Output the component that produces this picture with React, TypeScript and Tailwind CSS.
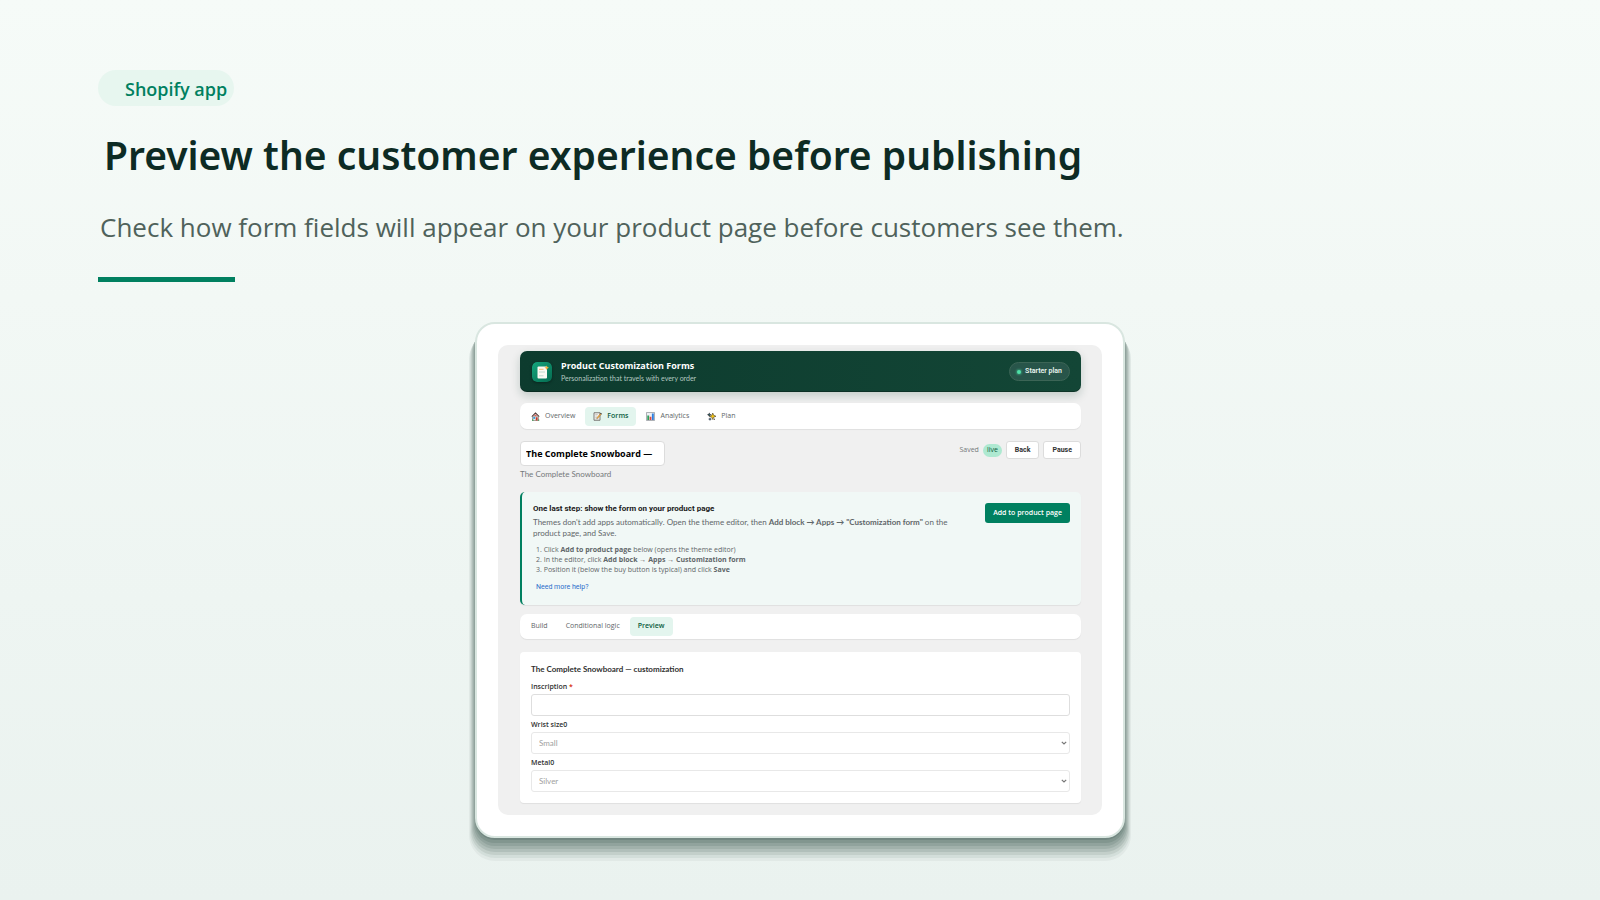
import { useState, type ReactNode } from "react";

function HouseIcon() {
  return (
    <svg viewBox="0 0 18 18" className="size-[9px]" aria-hidden="true">
      <path d="M3 8.5h12V17H3z" fill="#f1eee8" stroke="#5b5350" strokeWidth="1" />
      <path d="M9 .5.500 9H3l6-5.500L15 9h2.500z" fill="#4a2f2c" />
      <path d="M9 4.500 5.500 8h7z" fill="#d8665c" />
      <rect x="9.500" y="10.500" width="3.800" height="6.500" fill="#c0392b" />
      <rect x="4.500" y="10" width="3.800" height="3.800" fill="#3b9ad9" />
      <rect x="2" y="15" width="3" height="2.500" fill="#3f9b54" />
      <rect x="14" y="15" width="2.500" height="2.500" fill="#3f9b54" />
    </svg>
  );
}

function MemoIcon() {
  return (
    <svg viewBox="0 0 18 18" className="size-[9px]" aria-hidden="true">
      <path d="M2 1.500h12v15H2z" fill="#f7f5f2" stroke="#55504d" strokeWidth="1.500" />
      <path d="M4.500 5h5M4.500 8h4M4.500 11h3M4.500 14h7" stroke="#a3a09d" strokeWidth="1" />
      <path d="m8 11 6.500-8 2 1.700L10 12.500l-2.700.8z" fill="#f2a93b" stroke="#6b4a24" strokeWidth=".5" />
      <path d="m14.200 3.200 1.300-1.600 2.400 1.900-1.300 1.600z" fill="#3b3432" />
    </svg>
  );
}

function BarsIcon() {
  return (
    <svg viewBox="0 0 18 18" className="size-[9px]" aria-hidden="true">
      <path d="M1 1h16v16H1z" fill="#eef1f4" stroke="#7c8288" strokeWidth="1.200" />
      <rect x="2.600" y="7" width="3.600" height="9" fill="#2f9e5b" />
      <rect x="7.200" y="9.500" width="3.600" height="6.500" fill="#e0483e" />
      <rect x="11.800" y="3" width="3.800" height="13" fill="#2f7fe0" />
    </svg>
  );
}

function SparkIcon() {
  return (
    <svg viewBox="0 0 18 18" className="size-[9px]" aria-hidden="true">
      <path d="M4.500 1 6 4l3 1.500L6 7 4.500 10 3 7 0 5.500 3 4z" fill="#2b2a33" />
      <path d="m11.500 2 1.900 4.600L18 8.500l-4.600 1.900L11.500 15l-1.900-4.600L5 8.500l4.600-1.900z" fill="#f5c518" stroke="#3a3320" strokeWidth="1.100" />
      <path d="M6 10.500 7.200 13l2.600 1.200L7.200 15.400 6 18l-1.200-2.600L2.200 14.200 4.800 13z" fill="#3b4a5c" />
      <circle cx="4.500" cy="5.500" r="1.200" fill="#3aa6a0" />
      <circle cx="14.500" cy="14.500" r="1.300" fill="#4b3d20" />
    </svg>
  );
}

function AppLogo() {
  return (
    <svg viewBox="0 0 20 20" className="size-5 shrink-0 rounded-[5px] shadow-[0_1px_3px_rgba(0,0,0,0.35)]" aria-hidden="true">
      <defs>
        <linearGradient id="logo" x1="0" y1="0" x2="1" y2="1">
          <stop offset="0" stopColor="#15a67d" />
          <stop offset="1" stopColor="#056b50" />
        </linearGradient>
      </defs>
      <rect width="20" height="20" rx="5" fill="url(#logo)" />
      <rect x="5.500" y="4.500" width="9.500" height="12" rx="1" fill="#fbfaf3" />
      <path d="M7 7.300h4.500" stroke="#f0b36a" strokeWidth=".9" />
      <path d="M7 10h6M7 13.800h4.500" stroke="#b9d8cc" strokeWidth=".9" />
      <path d="m14.700 3.600.7 1.500 1.600.6-1.600.7-.7 1.500-.7-1.500-1.500-.7 1.500-.6z" fill="#f6b23c" />
    </svg>
  );
}

function Tab({ active, onClick, children }: { active: boolean; onClick: () => void; children: ReactNode }) {
  return (
    <button
      type="button"
      aria-pressed={active}
      onClick={onClick}
      className={
        active
          ? "flex h-[19px] items-center gap-[5px] rounded-[4px] bg-[#e3f5ee] px-2 text-[7px] font-semibold text-[#0b5c40]"
          : "flex h-[19px] items-center gap-[5px] rounded-[4px] px-2 text-[7px] font-medium text-[#616669]"
      }
    >
      {children}
    </button>
  );
}

function SelectField({ id, label, options }: { id: string; label: string; options: string[] }) {
  return (
    <div>
      <label htmlFor={id} className="block pt-0.5 text-[7px] leading-[14px] font-semibold text-[#303030]">
        {label}
      </label>
      <div className="relative">
        <select
          id={id}
          className="block h-[22px] w-full appearance-none rounded-[3px] border border-[#e8e8e8] bg-white px-[7px] font-[Lato,sans-serif] text-[8px] text-[#a0a0a0]"
        >
          {options.map((o) => (
            <option key={o}>{o}</option>
          ))}
        </select>
        <svg viewBox="0 0 6 4" className="pointer-events-none absolute top-[9px] right-[3px] h-1 w-1.5" aria-hidden="true">
          <path d="m.8.800 2.200 2.200L5.200.800" fill="none" stroke="#777" strokeWidth="1.200" />
        </svg>
      </div>
    </div>
  );
}

const sections = [
  { name: "Overview", icon: <HouseIcon /> },
  { name: "Forms", icon: <MemoIcon /> },
  { name: "Analytics", icon: <BarsIcon /> },
  { name: "Plan", icon: <SparkIcon /> },
];

const views = ["Build", "Conditional logic", "Preview"];

const panel = "bg-white shadow-[0_1px_1px_rgba(0,0,0,0.07)]";
const smallButton =
  "h-[18px] rounded-[3px] border border-[#dcdcdc] bg-white px-2 font-[Roboto,sans-serif] text-[7px] font-bold text-[#303030]";

export default function App() {
  const [section, setSection] = useState("Forms");
  const [view, setView] = useState("Preview");

  return (
    <main className="min-h-screen bg-linear-to-b from-[#f6fbf8] to-[#eaf2ef] pt-[70px] pb-10 font-['Open_Sans','Noto_Sans',sans-serif]">
      <header className="px-[98px]">
        <p className="flex h-9 w-[136px] items-center rounded-full bg-[#e7f6ef] pt-0.5 pl-[27px] text-[18px] font-semibold whitespace-nowrap text-[#008060]">
          Shopify app
        </p>
        <h1 className="mt-[23px] pl-1.5 font-['Noto_Sans',sans-serif] text-[39px] leading-[52px] font-semibold text-[#0d2b24]">
          Preview the customer experience before publishing
        </h1>
        <p className="mt-7 pl-0.5 text-[26px] leading-9 text-[#4f625b]">
          Check how form fields will appear on your product page before customers see them.
        </p>
        <div className="mt-8 h-[5px] w-[137px] bg-[#008060]" />
      </header>

      <section className="mx-auto mt-10 w-full max-w-[650px] rounded-[20px] border-2 border-[#d9e6e0] bg-white p-[21px] shadow-[0_3px_0_-1px_#728781,0_5px_0_0_#82968f,0_7px_0_1px_#91a39d,0_9px_0_2px_#a1b1ab,0_11px_0_3px_#b1bfba,0_13px_0_4px_#c3cfca,0_15px_0_5px_#d3deda,0_17px_0_6px_#e1e9e6]">
        <div className="rounded-[10px] bg-[#f0f0f0] pt-1.5 pr-[21px] pb-3 pl-[22px]">
          <div className="flex h-[41px] items-center rounded-[7px] bg-linear-to-r from-[#0d3b2e] to-[#134636] pr-[11px] pl-3 shadow-[0_4px_10px_rgba(13,59,46,0.2),inset_0_-1px_0_rgba(0,0,0,0.25)]">
            <AppLogo />
            <div className="ml-[9px] grow">
              <h2 className="text-[9px] leading-3 font-bold text-white">Product Customization Forms</h2>
              <p className="font-[Lato,sans-serif] text-[7px] leading-3 text-[#b4c9c0]">
                Personalization that travels with every order
              </p>
            </div>
            <p className="flex h-[19px] items-center gap-1 rounded-full border border-[#3c6556] bg-[#28554a] px-[7px] font-[Roboto,sans-serif] text-[7px] font-semibold text-[#eaf5f0]">
              <span className="size-1 rounded-full bg-[#4ee0a8] shadow-[0_0_2px_1px_rgba(78,224,168,0.4)]" />
              Starter plan
            </p>
          </div>

          <nav className={`mt-[11px] flex h-[26px] items-center gap-0.5 rounded-[7px] px-[3px] ${panel}`}>
            {sections.map((s) => (
              <Tab key={s.name} active={section === s.name} onClick={() => setSection(s.name)}>
                {s.icon}
                {s.name}
              </Tab>
            ))}
          </nav>

          <div className="mt-3 flex items-start justify-between">
            <div>
              <input
                aria-label="Form name"
                defaultValue="The Complete Snowboard —"
                className="block h-[25px] w-[145px] rounded-[4px] border border-[#dcdcdc] bg-white px-[5px] text-[9px] font-bold text-black"
              />
              <p className="font-[Lato,sans-serif] text-[8px] leading-4 text-[#75797b]">The Complete Snowboard</p>
            </div>
            <div className="flex items-center gap-1">
              <span className="text-[7px] text-[#75797b]">Saved</span>
              <span className="flex h-[13px] items-center rounded-full bg-[#aee9d1] px-1 text-[7px] font-medium text-[#0b5c40]">
                live
              </span>
              <button type="button" className={smallButton}>Back</button>
              <button type="button" className={smallButton}>Pause</button>
            </div>
          </div>

          <section className="mt-2.5 flex h-[113px] items-start justify-between rounded-[5px] border-l-2 border-[#008060] bg-[#f1f8f6] px-[11px] pt-[11px] text-[#5f6669] shadow-[0_1px_1px_rgba(0,0,0,0.07)]">
            <div className="w-[430px]">
              <h3 className="font-[Roboto,sans-serif] text-[8px] leading-3 font-bold text-[#1a1a1a]">
                One last step: show the form on your product page
              </h3>
              <p className="mt-0.5 font-[Lato,sans-serif] text-[8px] leading-[11px]">
                Themes don't add apps automatically. Open the theme editor, then <b>Add block → Apps → "Customization form"</b> on
                the product page, and Save.
              </p>
              <ol className="mt-1.5 list-inside list-decimal pl-[3px] text-[7px] leading-[10px]">
                <li>Click <b>Add to product page</b> below (opens the theme editor)</li>
                <li>In the editor, click <b>Add block → Apps → Customization form</b></li>
                <li>Position it (below the buy button is typical) and click <b>Save</b></li>
              </ol>
              <a href="#help" className="mt-[7px] block pl-[3px] font-[Roboto,sans-serif] text-[7px] leading-[10px] text-[#2c6ecb]">
                Need more help?
              </a>
            </div>
            <button type="button" className="h-5 shrink-0 rounded-[3px] bg-[#008060] px-2 text-[7px] font-semibold text-white">
              Add to product page
            </button>
          </section>

          <nav className={`mt-[9px] flex h-[25px] items-center gap-0.5 rounded-[7px] px-[3px] ${panel}`}>
            {views.map((v) => (
              <Tab key={v} active={view === v} onClick={() => setView(v)}>
                {v}
              </Tab>
            ))}
          </nav>

          <form className={`mt-[13px] rounded-[4px] px-[11px] pt-[11px] pb-[11px] ${panel}`}>
            <h3 className="font-[Lato,sans-serif] text-[8px] leading-3 font-bold text-[#303030]">
              The Complete Snowboard — customization
            </h3>
            <label htmlFor="inscription" className="mt-[3px] block pt-0.5 text-[7px] leading-[14px] font-semibold text-[#303030]">
              Inscription <span className="text-[#d72c0d]">*</span>
            </label>
            <input
              id="inscription"
              className="block h-[22px] w-full rounded-[3px] border border-[#dedede] bg-white px-[7px] text-[8px] text-[#303030]"
            />
            <SelectField id="wrist" label="Wrist size0" options={["Small", "Medium", "Large"]} />
            <SelectField id="metal" label="Metal0" options={["Silver", "Gold"]} />
          </form>
        </div>
      </section>
    </main>
  );
}
